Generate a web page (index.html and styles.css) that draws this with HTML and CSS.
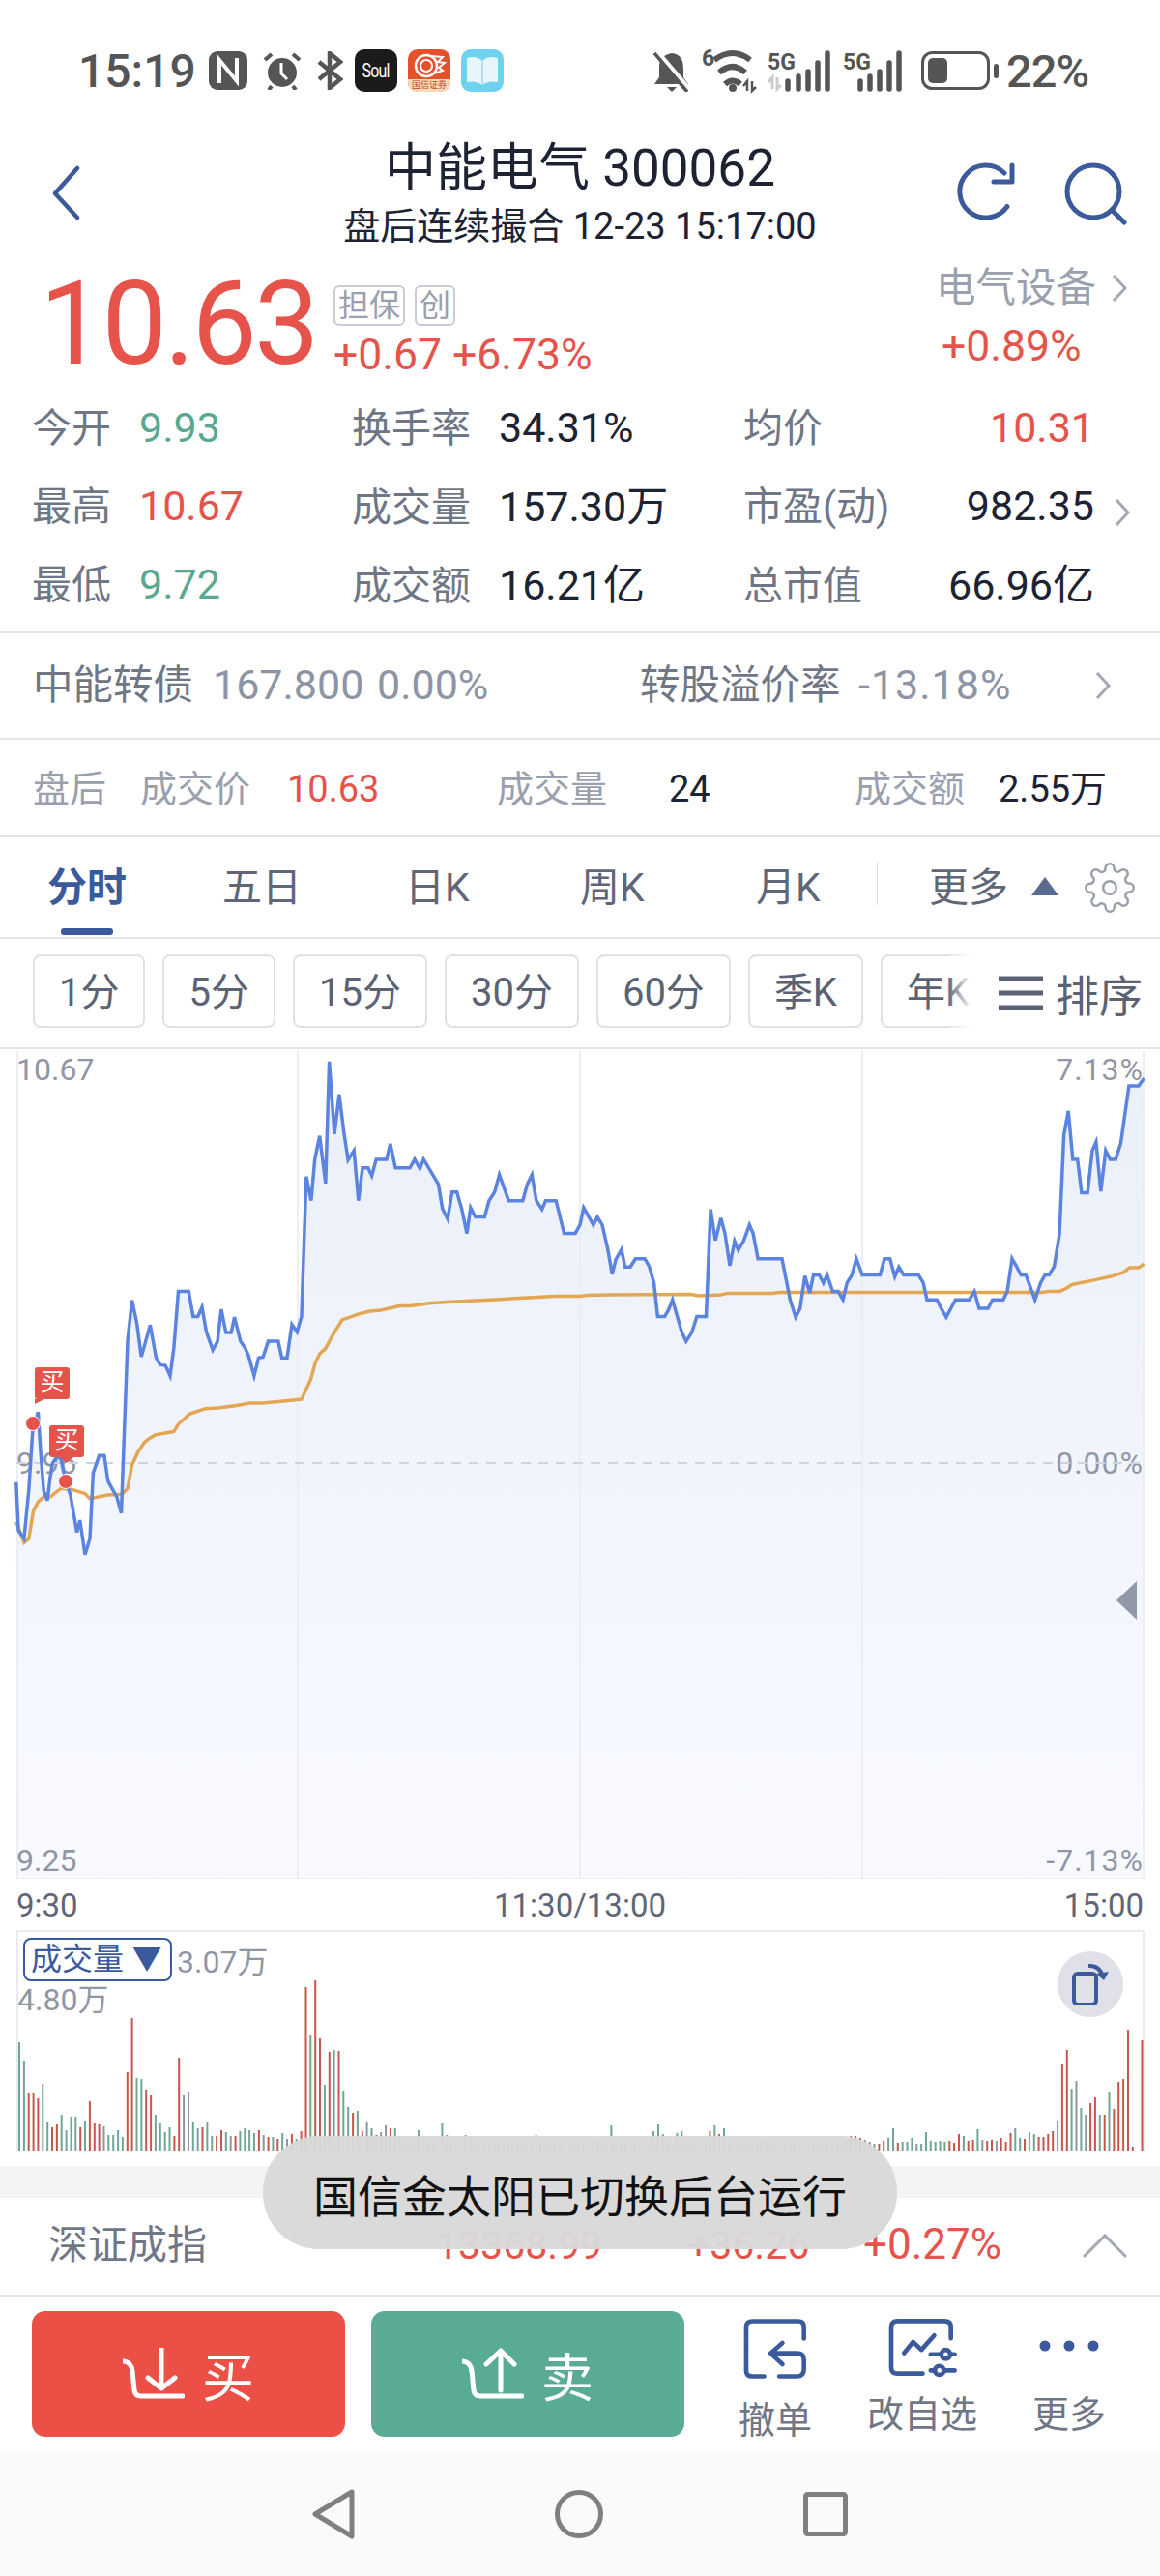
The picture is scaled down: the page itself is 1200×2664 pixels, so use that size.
FILE: index.html
```html
<!DOCTYPE html>
<html lang="zh-CN">
<head>
    <meta charset="UTF-8">
    <meta name="viewport" content="width=device-width, initial-scale=1.0">
    <title>中能电气 300062</title>
    <link rel="stylesheet" href="styles.css">
</head>
<body>
    <div class="statusbar">
        <div class="status-left">
            <span class="status-time">15:19</span>
            <svg class="si-nfc" width="40" height="40" viewBox="0 0 40 40"><rect width="40" height="40" rx="9" fill="#555"/><path d="M11 33V9l18 22V7" fill="none" stroke="#fff" stroke-width="4"/></svg>
            <svg class="si-alarm" width="40" height="40" viewBox="0 0 40 40"><circle cx="20" cy="22" r="15" fill="#555"/><path d="M2 9 9 3M38 9 31 3M9 36l-3 4M31 36l3 4" stroke="#555" stroke-width="4"/><path d="M19 12v11l6 6" fill="none" stroke="#fff" stroke-width="3"/></svg>
            <svg class="si-bt" width="27" height="40" viewBox="0 0 27 40"><path d="M2 11 24 29 13 38V2L24 11 2 29" fill="none" stroke="#555" stroke-width="4.5"/></svg>
            <div class="app-icon app-soul"><span>Soul</span></div>
            <div class="app-icon app-guoxin">
                <svg width="44" height="31" viewBox="0 0 44 31"><circle cx="19" cy="17" r="11" fill="none" stroke="#fff" stroke-width="2.5"/><circle cx="19" cy="17" r="6" fill="none" stroke="#fff" stroke-width="2"/><path d="M24 7l12 1-5 5 7 1-6 5 4 3-9 3" fill="none" stroke="#fff" stroke-width="2"/></svg>
                <span>国信证券</span>
            </div>
            <div class="app-icon app-book">
                <svg width="44" height="44" viewBox="0 0 44 44"><path d="M6 9q10-3 16 3 6-6 16-3v25q-10-2-16 3-6-5-16-3z" fill="#e8f6fb"/><path d="M22 12v25" stroke="#a9dff0" stroke-width="2"/></svg>
            </div>
        </div>
        <div class="status-right">
            <svg width="37" height="43" viewBox="0 0 37 43"><path d="M19 3q12 1 12 16v9l5 7H1l5-7V17q0-12 13-14zM14 38h10l-5 5z" fill="#555"/><path d="M2 1 37 42" stroke="#fff" stroke-width="7"/><path d="M1 3 35 43" stroke="#555" stroke-width="3.5"/></svg>
            <svg class="si-wifi" width="56" height="44" viewBox="0 0 56 44"><text class="sb-tag" x="0" y="17">6</text><path d="M13 11Q32-3 50 11M18 24Q32 12 45 24M24 36Q32 29 40 36" fill="none" stroke="#555" stroke-width="6"/><circle cx="32" cy="40" r="4" fill="#555"/><path d="M47 43V33l-4 5M52 33v10l4-4" fill="none" stroke="#555" stroke-width="2.5"/></svg>
            <svg class="si-sig" width="68" height="44" viewBox="0 0 68 44"><text class="sb-tag" x="0" y="21">5G</text><path d="M5 41V29l-4 5M10 29v12l4-4" fill="none" stroke="#ccc" stroke-width="3"/><path d="M21 41V33M32 41V28M42 41V23M52 41V14M62 41V4" stroke="#555" stroke-width="5.5" stroke-linecap="round"/></svg>
            <svg class="si-sig2" width="62" height="44" viewBox="0 0 62 44"><text class="sb-tag" x="0" y="21">5G</text><path d="M18 41V33M28 41V28M38 41V23M48 41V14M58 41V4" stroke="#555" stroke-width="5.5" stroke-linecap="round"/></svg>
            <svg class="si-batt" width="80" height="40" viewBox="0 0 80 40"><rect x="1.5" y="1.5" width="68" height="37" rx="10" fill="none" stroke="#555" stroke-width="3"/><rect x="7" y="7" width="20" height="26" rx="5" fill="#555"/><rect x="75" y="13" width="5" height="15" rx="2.5" fill="#555"/></svg>
            <span class="status-batt">22%</span>
        </div>
    </div>

    <div class="topbar">
        <svg class="back-icon" width="30" height="56" viewBox="0 0 30 56"><path d="M27 3 4 29l23 25" fill="none" stroke="#3b5a9b" stroke-width="4.5" stroke-linecap="round" stroke-linejoin="round"/></svg>
        <div class="topbar-title">
            <div class="title">中能电气 300062</div>
            <div class="subtitle">盘后连续撮合 12-23 15:17:00</div>
        </div>
        <div class="topbar-icons">
            <svg width="66" height="64" viewBox="0 0 66 64"><path d="M52 12A27 27 0 1 0 55 46.500" fill="none" stroke="#3b5a9b" stroke-width="5" stroke-linecap="round"/><path d="M41 21H60V4" fill="none" stroke="#3b5a9b" stroke-width="5" stroke-linecap="round" stroke-linejoin="round"/></svg>
            <svg width="68" height="66" viewBox="0 0 68 66"><circle cx="33" cy="31" r="27" fill="none" stroke="#3b5a9b" stroke-width="5"/><path d="M52 50 65 63" stroke="#3b5a9b" stroke-width="5" stroke-linecap="round"/></svg>
        </div>
    </div>

    <div class="quote">
        <div class="price">10.63</div>
        <div class="quote-mid">
            <div class="badges"><span class="badge">担保</span><span class="badge">创</span></div>
            <div class="change">+0.67 +6.73%</div>
        </div>
        <div class="sector">
            <div class="sector-name">电气设备
                <svg width="16" height="30" viewBox="0 0 16 30"><path d="M2 2 14 15 2 28" fill="none" stroke="#a2a8b4" stroke-width="3"/></svg>
            </div>
            <div class="sector-change">+0.89%</div>
        </div>
    </div>

    <div class="stats">
        <div class="stat-row">
            <div class="stat"><span class="stat-label">今开</span><span class="green">9.93</span></div>
            <div class="stat"><span class="stat-label">换手率</span><span>34.31%</span></div>
            <div class="stat stat-last"><span class="stat-label">均价</span><span class="red">10.31</span></div>
        </div>
        <div class="stat-row">
            <div class="stat"><span class="stat-label">最高</span><span class="red">10.67</span></div>
            <div class="stat"><span class="stat-label">成交量</span><span>157.30万</span></div>
            <div class="stat stat-last"><span class="stat-label">市盈(动)</span><span>982.35</span></div>
            <svg class="stat-more" width="16" height="30" viewBox="0 0 16 30"><path d="M2 2 14 15 2 28" fill="none" stroke="#a2a8b4" stroke-width="3"/></svg>
        </div>
        <div class="stat-row">
            <div class="stat"><span class="stat-label">最低</span><span class="green">9.72</span></div>
            <div class="stat"><span class="stat-label">成交额</span><span>16.21亿</span></div>
            <div class="stat stat-last"><span class="stat-label">总市值</span><span>66.96亿</span></div>
        </div>
    </div>

    <div class="bond">
        <span class="bond-name">中能转债</span>
        <span class="bond-num">167.800</span>
        <span class="bond-num">0.00%</span>
        <span class="bond-name">转股溢价率</span>
        <span class="bond-num bond-premium">-13.18%</span>
        <svg class="row-chevron" width="16" height="30" viewBox="0 0 16 30"><path d="M2 2 14 15 2 28" fill="none" stroke="#a2a8b4" stroke-width="3"/></svg>
    </div>

    <div class="after">
        <span class="after-label">盘后</span>
        <span class="after-label">成交价</span>
        <span class="red">10.63</span>
        <span class="after-label">成交量</span>
        <span>24</span>
        <span class="after-label">成交额</span>
        <span>2.55万</span>
    </div>

    <div class="tabs">
        <span class="tab tab-active">分时</span>
        <span class="tab">五日</span>
        <span class="tab">日K</span>
        <span class="tab">周K</span>
        <span class="tab">月K</span>
        <span class="tab-divider"></span>
        <span class="tab">更多</span>
        <span class="tab-arrow"></span>
        <svg class="gear" width="54" height="54" viewBox="0 0 24 24" fill="none" stroke="#9aa0ad" stroke-width="1.100"><circle cx="12" cy="12" r="3"/><path d="M19.4 15a1.65 1.65 0 0 0 .33 1.82l.06.06a2 2 0 0 1 0 2.83 2 2 0 0 1-2.83 0l-.06-.06a1.65 1.65 0 0 0-1.82-.33 1.65 1.65 0 0 0-1 1.51V21a2 2 0 0 1-2 2 2 2 0 0 1-2-2v-.09A1.65 1.65 0 0 0 9 19.4a1.65 1.65 0 0 0-1.82.33l-.06.06a2 2 0 0 1-2.83 0 2 2 0 0 1 0-2.83l.06-.06a1.65 1.65 0 0 0 .33-1.82 1.65 1.65 0 0 0-1.51-1H3a2 2 0 0 1-2-2 2 2 0 0 1 2-2h.09A1.65 1.65 0 0 0 4.600 9a1.65 1.65 0 0 0-.33-1.82l-.06-.06a2 2 0 0 1 0-2.83 2 2 0 0 1 2.83 0l.06.06a1.65 1.65 0 0 0 1.82.33H9a1.65 1.65 0 0 0 1-1.51V3a2 2 0 0 1 2-2 2 2 0 0 1 2 2v.09a1.65 1.65 0 0 0 1 1.51 1.65 1.65 0 0 0 1.82-.33l.06-.06a2 2 0 0 1 2.83 0 2 2 0 0 1 0 2.83l-.06.06a1.65 1.65 0 0 0-.33 1.82V9a1.65 1.65 0 0 0 1.51 1H21a2 2 0 0 1 2 2 2 2 0 0 1-2 2h-.09a1.65 1.65 0 0 0-1.51 1z"/></svg>
    </div>

    <div class="periods">
        <div class="period-list">
            <span class="period">1分</span>
            <span class="period">5分</span>
            <span class="period">15分</span>
            <span class="period">30分</span>
            <span class="period">60分</span>
            <span class="period">季K</span>
            <span class="period">年K</span>
        </div>
        <div class="sort">
            <svg width="46" height="36" viewBox="0 0 46 36"><path d="M0 3H46M0 18H46M0 33H46" stroke="#5a6274" stroke-width="5"/></svg>
            <span>排序</span>
        </div>
    </div>

    <div class="chart">
        <svg class="chart-svg" width="1200" height="858" viewBox="0 1084 1200 858">
            <defs>
                <linearGradient id="priceFill" x1="0" y1="0" x2="0" y2="1">
                    <stop offset="0" stop-color="#ebeff9"/>
                    <stop offset="1" stop-color="#f8faff"/>
                </linearGradient>
            </defs>
            <polygon id="priceArea" fill="url(#priceFill)"/>
            <path d="M18 1086V1942H1183V1086M308 1086V1942M600 1086V1942M892 1086V1942" fill="none" stroke="#eceef3" stroke-width="2"/>
            <text class="chart-label" x="17" y="1116">10.67</text>
            <text class="chart-label" x="17" y="1523">9.96</text>
            <text class="chart-label" x="17" y="1934">9.25</text>
            <text class="chart-label chart-label-end" x="1183" y="1116">7.13%</text>
            <text class="chart-label chart-label-end" x="1183" y="1523">0.00%</text>
            <text class="chart-label chart-label-end" x="1183" y="1934">-7.13%</text>
            <path d="M17 1512H1183" stroke="#ccd3e3" stroke-width="2" stroke-dasharray="10 8"/>
            <polyline id="avgLine" fill="none" stroke="#e3a653" stroke-width="3.500"/>
            <polyline id="priceLine" fill="none" stroke="#5a84e0" stroke-width="3.500"/>
            <circle cx="34" cy="1471" r="7.500" fill="#e5534b" stroke="#fff" stroke-width="1"/>
            <circle cx="68" cy="1531" r="7.500" fill="#e5534b" stroke="#fff" stroke-width="1"/>
            <path d="M1176 1634 1155 1654 1176 1674z" fill="#9198a8"/>
        </svg>
        <span class="trade-tag trade-tag-1">买</span>
        <span class="trade-tag trade-tag-2">买</span>
    </div>

    <div class="axis">
        <span>9:30</span>
        <span>11:30/13:00</span>
        <span class="axis-end">15:00</span>
    </div>

    <div class="volume">
        <svg class="volume-svg" width="1200" height="244" viewBox="0 1995 1200 244">
            <path d="M17 1996H1183M18 1996V2223M1183 1996V2223" fill="none" stroke="#e9ebf0" stroke-width="2"/>
            <g id="volumeBars"></g>
        </svg>
        <div class="volume-head">
            <span class="volume-btn">成交量 ▼</span>
            <span class="volume-val">3.07万</span>
        </div>
        <div class="volume-max">4.80万</div>
        <div class="rotate-btn">
            <svg width="44" height="44" viewBox="0 0 44 44"><rect x="5" y="11" width="23" height="32" rx="4" fill="none" stroke="#3b5a9b" stroke-width="4"/><path d="M20 3q12-1 15 12" fill="none" stroke="#3b5a9b" stroke-width="4"/><path d="M28 11l8 7 5-9" fill="#3b5a9b"/></svg>
        </div>
    </div>

    <div class="band"></div>

    <div class="index-row">
        <span class="index-name">深证成指</span>
        <span class="red">13368.99</span>
        <span class="red">+36.26</span>
        <span class="red index-pct">+0.27%</span>
        <svg class="row-chevron" width="48" height="26" viewBox="0 0 48 26"><path d="M2 24 24 2 46 24" fill="none" stroke="#a2a8b4" stroke-width="3"/></svg>
    </div>

    <div class="actions">
        <div class="trade-btn trade-buy">
            <svg width="64" height="54" viewBox="0 0 64 54"><path d="M1 14q8 1 9 10l2 20q1 6 7 6h43M40 1v41M26 31l14 11 14-11" fill="none" stroke="#fff" stroke-width="5" stroke-linecap="round" stroke-linejoin="round"/></svg>
            <span>买</span>
        </div>
        <div class="trade-btn trade-sell">
            <svg width="64" height="54" viewBox="0 0 64 54"><path d="M1 14q8 1 9 10l2 20q1 6 7 6h43M40 3v41M25 17 40 3l14 14" fill="none" stroke="#fff" stroke-width="5" stroke-linecap="round" stroke-linejoin="round"/></svg>
            <span>卖</span>
        </div>
        <div class="action">
            <svg width="68" height="65" viewBox="80 40 205 195" fill="none" stroke="#3b5a9b" stroke-width="14" stroke-linecap="round" stroke-linejoin="round"><path d="M272 104V68Q272 50 254 50H112Q92 50 92 68V205Q92 222 112 222H148M195 222H250Q272 222 272 200V170Q272 150 250 150H168M205 118 168 150 205 184"/></svg>
            <span class="action-label action-label-low">撤单</span>
        </div>
        <div class="action">
            <svg width="73" height="63" viewBox="530 40 220 190" fill="none" stroke="#3b5a9b" stroke-width="14" stroke-linecap="round" stroke-linejoin="round"><path d="M728 104V68Q728 50 708 50H562Q542 50 542 70V195Q542 214 562 214H640M582 150 610 115 636 140 676 95M665 154H740M665 204H740"/><circle cx="712" cy="154" r="14" fill="#fff"/><circle cx="692" cy="204" r="14" fill="#fff"/></svg>
            <span class="action-label">改自选</span>
        </div>
        <div class="action">
            <svg class="action-dots" width="66" height="63" viewBox="0 0 66 63"><circle cx="8" cy="29" r="5.500" fill="#3b5a9b"/><circle cx="33" cy="29" r="5.500" fill="#3b5a9b"/><circle cx="58" cy="29" r="5.500" fill="#3b5a9b"/></svg>
            <span class="action-label">更多</span>
        </div>
    </div>

    <div class="navbar">
        <svg width="44" height="52" viewBox="0 0 44 52"><path d="M41 3 3 26l38 23z" fill="none" stroke="#808080" stroke-width="5" stroke-linejoin="round"/></svg>
        <svg width="50" height="50" viewBox="0 0 50 50"><circle cx="25" cy="25" r="22.500" fill="none" stroke="#808080" stroke-width="5"/></svg>
        <svg width="46" height="46" viewBox="0 0 46 46"><rect x="2.500" y="2.500" width="41" height="41" rx="2" fill="none" stroke="#808080" stroke-width="5"/></svg>
    </div>

    <div class="toast">国信金太阳已切换后台运行</div>

    <script src="chart.js"></script>
</body>
</html>
```

FILE: styles.css
```css
* {
    box-sizing: border-box;
}
body {
    margin: 0;
    width: 1200px;
    height: 2664px;
    overflow: hidden;
    position: relative;
    background-color: #fff;
    font-family: Roboto, "Noto Sans CJK SC", sans-serif;
    color: #1d2333;
}
.red { color: #e5534b; }
.green { color: #58a892; }

/* status bar */
.statusbar {
    height: 140px;
    padding: 6px 74px 0 81px;
    display: flex;
    justify-content: space-between;
    align-items: center;
}
.status-left, .status-right {
    display: flex;
    align-items: center;
}
.status-time {
    font-size: 48px;
    font-weight: 500;
    color: #555;
    width: 135px;
}
.si-nfc { margin-right: 16px; }
.si-alarm { margin-right: 16px; }
.si-bt { margin-right: 12px; }
.app-icon {
    width: 44px;
    height: 44px;
    border-radius: 10px;
    margin-right: 11px;
    flex: none;
}
.app-soul {
    background-color: #1b1b1b;
    color: #fff;
    display: flex;
    align-items: center;
    justify-content: center;
}
.app-soul span {
    font-size: 20px;
    line-height: 24px;
    letter-spacing: -1px;
    transform: scaleX(0.8);
}
.app-guoxin {
    background-color: #e5512a;
    color: #fff;
    display: flex;
    flex-direction: column;
    align-items: center;
}
.app-guoxin span {
    font-size: 9px;
    line-height: 13px;
    height: 13px;
    background-color: #f6d9b8;
    color: #c9401f;
    width: 100%;
    text-align: center;
    border-radius: 0 0 10px 10px;
}
.app-book { background-color: #6fd3f0; }
.si-wifi { margin-left: 13px; overflow: visible; }
.si-sig { margin-left: 12px; overflow: visible; }
.si-sig2 { margin-left: 10px; overflow: visible; }
.si-batt { margin-left: 19px; margin-right: 8px; }
.sb-tag {
    font-size: 23px;
    font-weight: 700;
    fill: #555;
}
.status-batt {
    font-size: 47px;
    font-weight: 500;
    color: #555;
    letter-spacing: -1px;
}

/* title */
.topbar {
    height: 130px;
    padding: 2px 34px 0;
    display: grid;
    grid-template-columns: 1fr auto 1fr;
    align-items: start;
}
.back-icon { margin: 29px 0 0 19px; }
.topbar-title { text-align: center; }
.title {
    font-size: 53px;
    line-height: 64px;
}
.subtitle {
    font-size: 38px;
    line-height: 56px;
}
.topbar-icons {
    justify-self: end;
    display: flex;
    gap: 45px;
    margin-top: 25px;
}

/* price */
.quote {
    height: 130px;
    padding-left: 41px;
    display: flex;
}
.price {
    font-size: 120px;
    line-height: 130px;
    color: #e5534b;
    letter-spacing: -3px;
    width: 304px;
}
.quote-mid { padding-top: 25px; }
.badges {
    display: flex;
    gap: 10px;
}
.badge {
    height: 42px;
    line-height: 38px;
    padding: 0 3px;
    font-size: 32px;
    color: #9aa0ad;
    border: 2px solid #c9ccd6;
    border-radius: 6px;
}
.change {
    font-size: 44.5px;
    line-height: 46px;
    margin-top: 7px;
    color: #e5534b;
}
.sector {
    margin-left: auto;
    width: 232px;
    padding-top: 8px;
}
.sector-name {
    font-size: 41.5px;
    line-height: 40px;
    color: #9aa1ad;
    display: flex;
    align-items: center;
    gap: 16px;
}
.sector-change {
    font-size: 44.5px;
    line-height: 40px;
    margin-top: 20px;
    margin-left: 6px;
    color: #e5534b;
}

/* stats */
.stats {
    height: 255px;
    padding-bottom: 11px;
    border-bottom: 2px solid #e3e5e9;
}
.stat-row {
    height: 81px;
    padding: 0 0 4px 33px;
    display: grid;
    grid-template-columns: 331px 405px 363px 1fr;
    align-items: center;
    font-size: 43px;
}
.stat {
    display: flex;
    align-items: baseline;
}
.stat-label {
    font-size: 41px;
    color: #6f7685;
    margin-right: 29px;
}
.stat-last { justify-content: space-between; }
.stat-last .stat-label { margin-right: 0; }
.stat-more {
    margin: 20px 0 0 21px;
}

/* bond row */
.bond {
    height: 110px;
    padding-left: 34px;
    display: grid;
    grid-template-columns: 186px 170px 272px 226px 245px 1fr;
    align-items: baseline;
    line-height: 107px;
    border-bottom: 2px solid #e3e5e9;
    font-size: 43px;
}
.bond-name {
    font-size: 41.5px;
    color: #6f7685;
}
.bond-num { color: #8d94a3; }
.bond-premium { letter-spacing: 1px; }
.row-chevron { align-self: center; }

/* after hours */
.after {
    height: 101px;
    padding-left: 34px;
    display: grid;
    grid-template-columns: 111px 152px 217px 178px 192px 149px 1fr;
    align-items: baseline;
    line-height: 103px;
    border-bottom: 2px solid #e3e5e9;
    font-size: 38px;
}
.after-label { color: #9aa0ad; }

/* tabs */
.tabs {
    height: 105px;
    padding: 0 0 8px 49px;
    display: grid;
    grid-template-columns: 181px 189px 181px 182px 125px 54px 106px 59px 1fr;
    align-items: center;
    border-bottom: 2px solid #e3e5e9;
    font-size: 41px;
    color: #5f6678;
}
.tab-active {
    position: relative;
    font-weight: 700;
    color: #3b5a9b;
}
.tab-active::after {
    content: "";
    position: absolute;
    left: 14px;
    top: 76px;
    width: 54px;
    height: 7px;
    border-radius: 3px;
    background-color: #3b5a9b;
}
.tab-divider {
    width: 1px;
    height: 45px;
    background-color: #dfe1e6;
}
.tab-arrow {
    width: 0;
    height: 0;
    margin-top: 6px;
    border-left: 14px solid transparent;
    border-right: 14px solid transparent;
    border-bottom: 19px solid #5a6b93;
}
.gear { margin: 8px 0 0 -5px; }

/* periods */
.periods {
    height: 114px;
    padding-left: 34px;
    display: flex;
    align-items: flex-start;
    border-bottom: 2px solid #e3e5e9;
    position: relative;
}
.period-list {
    display: flex;
    gap: 18px;
    padding-top: 16px;
    width: 1000px;
    overflow: hidden;
    flex: none;
}
.period {
    height: 76px;
    line-height: 76px;
    padding: 0 25px;
    font-size: 40px;
    color: #5a6274;
    border: 2px solid #dfe1e6;
    border-radius: 8px;
    flex: none;
}
.sort {
    position: absolute;
    left: 1005px;
    top: 0;
    height: 112px;
    width: 195px;
    padding-left: 28px;
    display: flex;
    align-items: center;
    gap: 13px;
    background-color: #fff;
    font-size: 45px;
    color: #5a6274;
}
.sort::before {
    content: "";
    position: absolute;
    left: -25px;
    top: 0;
    bottom: 0;
    width: 25px;
    background: linear-gradient(to right, rgba(255, 255, 255, 0), #fff);
}

/* chart */
.chart {
    height: 858px;
    position: relative;
}
.chart-svg, .volume-svg {
    display: block;
}
.chart-label {
    font-size: 32px;
    fill: #9096a4;
}
.chart-label-end {
    text-anchor: end;
    letter-spacing: 1px;
}
.trade-tag {
    position: absolute;
    width: 36px;
    height: 33px;
    line-height: 32px;
    font-size: 25px;
    text-align: center;
    color: #fff;
    background-color: #e5534b;
    border-radius: 3px;
}
.trade-tag-1 { left: 36px; top: 329px; }
.trade-tag-2 { left: 51px; top: 389px; }
.trade-tag-1::after {
    content: "";
    position: absolute;
    left: 0;
    top: 33px;
    border-top: 5px solid #e5534b;
    border-right: 10px solid transparent;
}
.trade-tag-2::after {
    content: "";
    position: absolute;
    left: 11px;
    top: 33px;
    border-top: 6px solid #e5534b;
    border-left: 7px solid transparent;
    border-right: 7px solid transparent;
}

.axis {
    height: 53px;
    padding: 2px 17px 0;
    display: grid;
    grid-template-columns: 1fr auto 1fr;
    align-items: center;
    font-size: 33px;
    color: #5f6678;
}
.axis-end { justify-self: end; }

/* volume */
.volume {
    height: 244px;
    position: relative;
}
.volume-head {
    position: absolute;
    left: 24px;
    top: 7px;
    display: flex;
    align-items: center;
    gap: 5px;
    background-color: #fff;
}
.volume-btn {
    height: 45px;
    width: 154px;
    line-height: 41px;
    padding-left: 6px;
    font-size: 32px;
    color: #3b5a9b;
    border: 2px solid #3b5a9b;
    border-radius: 8px;
    white-space: nowrap;
}
.volume-val {
    font-size: 32px;
    color: #9096a4;
}
.volume-max {
    position: absolute;
    left: 18px;
    top: 53px;
    font-size: 32px;
    line-height: 38px;
    color: #9096a4;
}
.rotate-btn {
    position: absolute;
    left: 1094px;
    top: 22px;
    width: 68px;
    height: 68px;
    border-radius: 50%;
    background-color: #dfe0e8;
    display: flex;
    align-items: center;
    justify-content: center;
}

.band {
    height: 33px;
    background-color: #f3f4f6;
}

/* index row */
.index-row {
    height: 102px;
    padding-left: 50px;
    display: grid;
    grid-template-columns: 401px 260px 182px 226px 1fr;
    align-items: baseline;
    line-height: 96px;
    border-bottom: 2px solid #e3e5e9;
    font-size: 41px;
}
.index-name {
    font-size: 41px;
    color: #6f7685;
}
.index-pct { font-size: 44px; }

/* bottom actions */
.actions {
    height: 160px;
    padding: 15px 0 0 33px;
    display: flex;
    align-items: flex-start;
}
.trade-btn {
    width: 324px;
    height: 130px;
    border-radius: 14px;
    display: flex;
    align-items: center;
    justify-content: center;
    gap: 18px;
    color: #fff;
    font-size: 54px;
    flex: none;
}
.trade-buy {
    background-color: #ec4f46;
    margin-right: 27px;
}
.trade-sell {
    background-color: #5aab95;
    margin-right: 18px;
}
.action {
    width: 152px;
    display: flex;
    flex-direction: column;
    align-items: center;
    margin-top: 7px;
    flex: none;
}
.action-label {
    font-size: 38px;
    line-height: 44px;
    margin-top: 15px;
    color: #6f7685;
}
.action-label-low { margin-top: 19px; }

.navbar {
    height: 130px;
    padding-left: 323px;
    display: flex;
    align-items: center;
    gap: 207px;
    background-color: #fafafa;
}

.toast {
    position: absolute;
    left: 272px;
    top: 2209px;
    width: 656px;
    height: 117px;
    border-radius: 58px;
    background-color: rgba(216, 216, 216, 0.96);
    display: flex;
    align-items: center;
    justify-content: center;
    font-size: 46px;
    color: #111;
}
```

FILE: chart.js
```js
const priceAm = "44,1265 50,1405 65,1428 78,1285 88,1120 103,1062 110,1180 118,1290 128,1318 136,1250 142,1210 155,1190 165,1200 178,1265 190,1300 208,1410 216,1375 230,1475 243,1428 252,1238 268,1188 282,1188 292,1262 316,1308 328,1355 345,855 357,738 370,805 382,902 406,810 422,905 433,925 447,927 460,957 470,875 482,713 510,713 522,785 535,785 546,758 558,830 575,882 588,858 598,765 611,832 625,832 634,787 650,857 662,875 672,900 687,957 699,905 711,903 725,857 752,857 762,905 776,905 789,808 803,830 815,785 828,380 841,450 851,330 864,262 880,400 890,47 904,257 917,142 930,255 941,332 957,305 969,450 980,355 995,355 1005,378 1017,330 1045,330 1055,285 1069,355 1108,355 1121,330 1135,357 1145,330 1185,402 1196,473 1210,503 1222,425 1235,425 1248,473 1262,545 1272,470 1285,497 1310,497 1322,450 1337,425 1350,375 1375,450 1413,450 1425,403 1438,375 1450,450 1465,475 1475,450 1503,450 1525,545 1555,545";
const pricePm = "0,520 10,470 36,520 47,497 60,520 75,590 87,663 97,620 112,592 122,642 136,642 150,618 175,618 187,640 200,688 210,785 229,785 240,765 250,737 275,830 287,857 302,832 316,785 341,785 353,475 366,565 381,500 392,545 405,638 418,567 428,593 442,567 458,520 468,545 481,618 546,618 568,737 583,787 595,762 608,668 621,717 631,665 647,665 658,688 668,665 683,713 698,713 711,737 722,688 735,665 747,618 763,665 811,665 823,618 838,618 851,670 862,642 875,665 915,665 928,688 938,737 965,737 978,765 990,787 1015,737 1052,737 1066,713 1079,762 1103,762 1115,737 1144,737 1155,713 1168,618 1180,640 1192,665 1205,665 1230,737 1245,688 1257,665 1268,665 1282,640 1296,547 1302,405 1308,260 1320,190 1332,330 1345,330 1356,427 1372,427 1385,305 1395,280 1408,423 1421,305 1433,330 1448,330 1462,283 1484,118 1510,118 1525,95";
const avgAm = "44,1380 65,1440 78,1428 90,1350 103,1322 118,1308 136,1308 165,1283 190,1285 230,1298 243,1313 255,1310 290,1302 330,1300 345,1283 357,1215 372,1180 390,1150 405,1137 420,1128 470,1118 482,1097 497,1083 512,1068 555,1052 590,1050 640,1043 675,1036 710,1036 760,1031 815,1025 840,967 852,920 865,892 880,878 900,838 925,795 970,778 1000,770 1030,767 1080,755 1110,755 1160,747 1230,742 1310,738 1390,733 1440,730 1500,727";
const avgPm = "0,727 20,724 80,722 300,721 320,725 380,722 400,718 520,718 540,715 1250,715 1265,713 1296,713 1315,703 1330,693 1380,682 1440,668 1470,657 1485,644 1510,644 1525,633";

// bar heights in px with a colour letter: r up, g down, n flat
const volAm = "112g 93g 59r 60r 54r 69g 29g 24r 27r 37g 21g 35g 35g 24r 31g 51r 28r 27r 25n 16g 16g 21g 14g 81r 137r 75g 74g 63r 57r 37g 28g 19g 24g 15r 96r 57n 61n 29g 23g 24r 29g 15g 15r 21r 19g 15n 15r 20g 23g 21g 18g 21r 16n 14r 14g 12r 18g 12n 17r 12g 20r 169r 119g 176r 116r 68g 102r 104g 103r 62g 45g 39r 41g 20r 29n 23g 16r 19n 26n 23r 23g 15g";
const volClose = "15r 15r 13r 11n 9n 7g 7r 10r 13g 23g 8r 9g 9g 13g 7n 7g 19g 10g 9g 10g 9g 10r 8r 17r 15g 10r 11r 22g 11n 10r 11r 10g 13r 9r 18r 23g 13g 12r 19g 17g 14r 14r 17r 20r 31n 90r 104r 64g 72n 44g 37n 49r 55r 37g 37r 61g 43r 71r 74r 125r 4r 0r 114r";
const volMid = { 85: "21g", 90: "28g", 91: "16g", 93: "15g", 95: "16g", 96: "15r", 103: "15g", 110: "16g", 126: "26g", 135: "20g", 136: "27g", 137: "17g", 140: "18g", 141: "20g", 147: "20r", 148: "26g", 149: "17r", 150: "23g" };
const volColors = { r: "#c8564d", g: "#6ea796", n: "#8f95a3" };

function toPoints(str, left) {
    return str.split(" ").map(function (p) {
        const xy = p.split(",");
        return (left + xy[0] / 2.613).toFixed(1) + "," + (1080 + xy[1] / 2.8).toFixed(1);
    });
}

const price = toPoints(priceAm, 0).concat(toPoints(pricePm, 600));
const avg = toPoints(avgAm, 0).concat(toPoints(avgPm, 600));

document.getElementById("priceLine").setAttribute("points", price.join(" "));
document.getElementById("avgLine").setAttribute("points", avg.join(" "));
document.getElementById("priceArea").setAttribute("points", "17,1942 " + price.join(" ") + " 1183,1942");

// midday bars are small, the toast covers most of them
const bars = volAm.split(" ");
for (let i = bars.length; i < 177; i++) {
    bars.push(volMid[i] || (4 + (i * 7) % 9) + (i % 3 === 0 ? "r" : "g"));
}
const allBars = bars.concat(volClose.split(" "));

const group = document.getElementById("volumeBars");
allBars.forEach(function (bar, i) {
    const h = parseInt(bar);
    const rect = document.createElementNS("http://www.w3.org/2000/svg", "rect");
    rect.setAttribute("x", (19 + i * 4.86).toFixed(1));
    rect.setAttribute("y", 2223 - h);
    rect.setAttribute("width", 2);
    rect.setAttribute("height", h);
    rect.setAttribute("fill", volColors[bar.slice(-1)]);
    group.appendChild(rect);
});
```
